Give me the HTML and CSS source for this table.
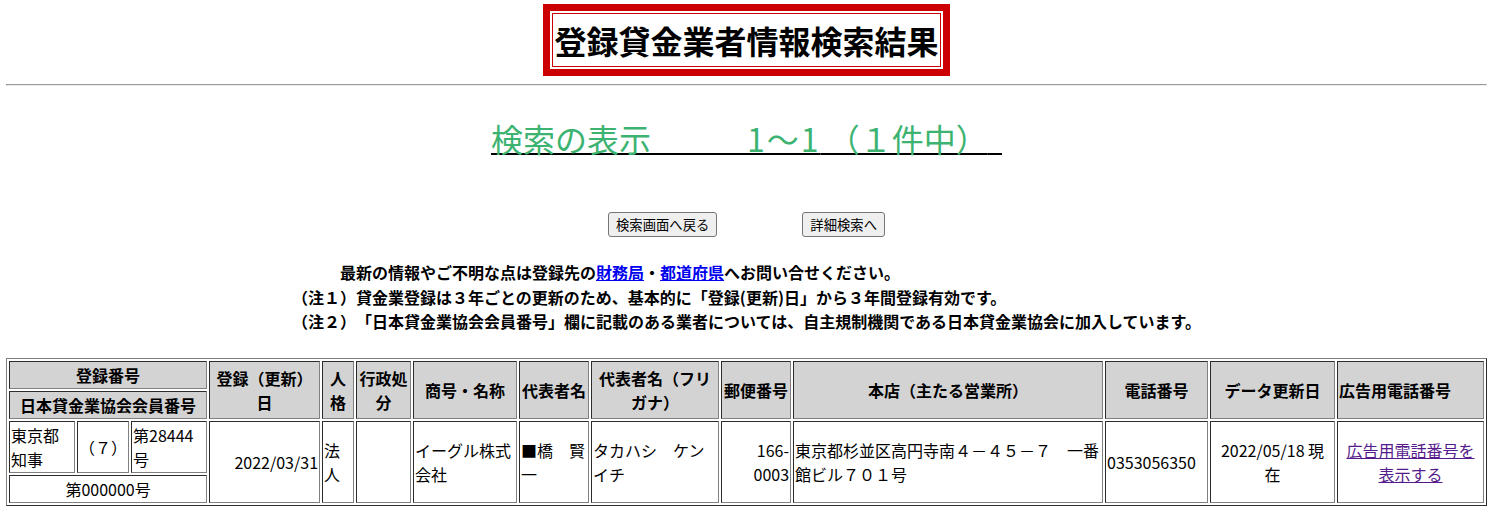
FILE: index.html
```html
<!DOCTYPE html>
<html lang="ja">
<head>
<meta charset="utf-8">
<title>登録貸金業者情報検索結果</title>
<link rel="stylesheet" href="styles.css">
</head>
<body>
<div class="title"><div class="title-inner">登録貸金業者情報検索結果</div></div>
<hr class="rule">
<p class="count"><span class="ul"><span class="green">検索の表示　　　<span class="range">1～1</span> （１件中）</span>&nbsp;&nbsp;</span></p>
<div class="actions">
  <button class="btn" type="button">検索画面へ戻る</button>
  <button class="btn" type="button">詳細検索へ</button>
</div>
<div class="notes">
  　　　最新の情報やご不明な点は登録先の<a href="#">財務局</a>・<a href="#">都道府県</a>へお問い合せください。<br>
  （注１）貸金業登録は３年ごとの更新のため、基本的に「登録(更新)日」から３年間登録有効です。<br>
  （注２）「日本貸金業協会会員番号」欄に記載のある業者については、自主規制機関である日本貸金業協会に加入しています。
</div>
<table class="results">
  <colgroup>
    <col class="w66"><col class="w52"><col class="w76">
    <col class="w111"><col class="w32"><col class="w55"><col class="w104">
    <col class="w70"><col class="w128"><col class="w70"><col class="w310">
    <col class="w103"><col class="w125"><col class="w147">
  </colgroup>
  <tr>
    <th colspan="3">登録番号</th>
    <th rowspan="2">登録（更新）日</th>
    <th rowspan="2">人格</th>
    <th rowspan="2">行政処分</th>
    <th rowspan="2">商号・名称</th>
    <th rowspan="2">代表者名</th>
    <th rowspan="2">代表者名（フリガナ）</th>
    <th rowspan="2">郵便番号</th>
    <th rowspan="2">本店（主たる営業所）</th>
    <th rowspan="2">電話番号</th>
    <th rowspan="2">データ更新日</th>
    <th rowspan="2" class="left">広告用電話番号</th>
  </tr>
  <tr>
    <th colspan="3">日本貸金業協会会員番号</th>
  </tr>
  <tr>
    <td>東京都知事</td>
    <td class="center">（７）</td>
    <td>第28444号</td>
    <td rowspan="2" class="right">2022/03/31</td>
    <td rowspan="2">法人</td>
    <td rowspan="2"></td>
    <td rowspan="2">イーグル株式会社</td>
    <td rowspan="2">■橋　賢一</td>
    <td rowspan="2">タカハシ　ケンイチ</td>
    <td rowspan="2" class="right">166-<br>0003</td>
    <td rowspan="2">東京都杉並区高円寺南４－４５－７　一番館ビル７０１号</td>
    <td rowspan="2">0353056350</td>
    <td rowspan="2" class="center">2022/05/18 現<br>在</td>
    <td rowspan="2" class="center"><a class="visited" href="#">広告用電話番号を表示する</a></td>
  </tr>
  <tr>
    <td colspan="3" class="center">第000000号</td>
  </tr>
</table>
</body>
</html>
```
FILE: styles.css
```css
body {
  margin: 4px 5px 0 6px;
  font-family: "Noto Sans CJK JP", "Noto Sans", sans-serif;
  font-size: 16px;
  color: #000;
  background: #fff;
  text-spacing-trim: space-all;
}

.title {
  width: fit-content;
  margin: 0 auto;
  border: 7px solid #cc0000;
  padding: 2px;
}

.title-inner {
  border: 1px solid #cc0000;
  padding: 1px;
  font-size: 32px;
  font-weight: bold;
  line-height: 50px;
  white-space: nowrap;
}

.rule {
  margin: 8px 0;
  border-width: 1px;
  border-style: inset;
  color: gray;
}

.count {
  margin: 29px 0 0;
  text-align: center;
  font-size: 32px;
  line-height: 46px;
  white-space: nowrap;
}

.count .ul {
  text-decoration: underline;
  text-decoration-color: #000;
  text-decoration-thickness: 2px;
  text-underline-offset: 1px;
}

.count .green {
  color: #3cb371;
}

.count .range {
  letter-spacing: 2px;
}

.actions {
  display: flex;
  justify-content: center;
  gap: 85px;
  margin-top: 51px;
}

.btn {
  font-family: inherit;
  font-size: 13.333px;
  height: 25px;
  padding: 0 7px;
  border: 1px solid #767676;
  border-radius: 3px;
  background: #efefef;
  color: #000;
  line-height: 21px;
}

.notes {
  width: fit-content;
  margin: 23px auto 0;
  font-weight: bold;
  line-height: 24.5px;
  white-space: nowrap;
}

.notes a {
  color: #0000ee;
}

.results {
  width: 1481px;
  margin-top: 24px;
  table-layout: fixed;
  border-collapse: separate;
  border-spacing: 2px;
  border: 1px outset gray;
}

.results th,
.results td {
  border: 1px inset gray;
  padding: 1px;
  line-height: 24px;
  vertical-align: middle;
  text-align: left;
}

.results th {
  background: #d3d3d3;
  font-weight: bold;
  text-align: center;
}

.results th.left {
  text-align: left;
}

.results .center {
  text-align: center;
}

.results .right {
  text-align: right;
}

.results a.visited {
  color: #551a8b;
}

.w66 { width: 66px; }
.w52 { width: 52px; }
.w76 { width: 76px; }
.w111 { width: 111px; }
.w32 { width: 32px; }
.w55 { width: 55px; }
.w104 { width: 104px; }
.w70 { width: 70px; }
.w128 { width: 128px; }
.w310 { width: 310px; }
.w103 { width: 103px; }
.w125 { width: 125px; }
.w147 { width: 147px; }
```
